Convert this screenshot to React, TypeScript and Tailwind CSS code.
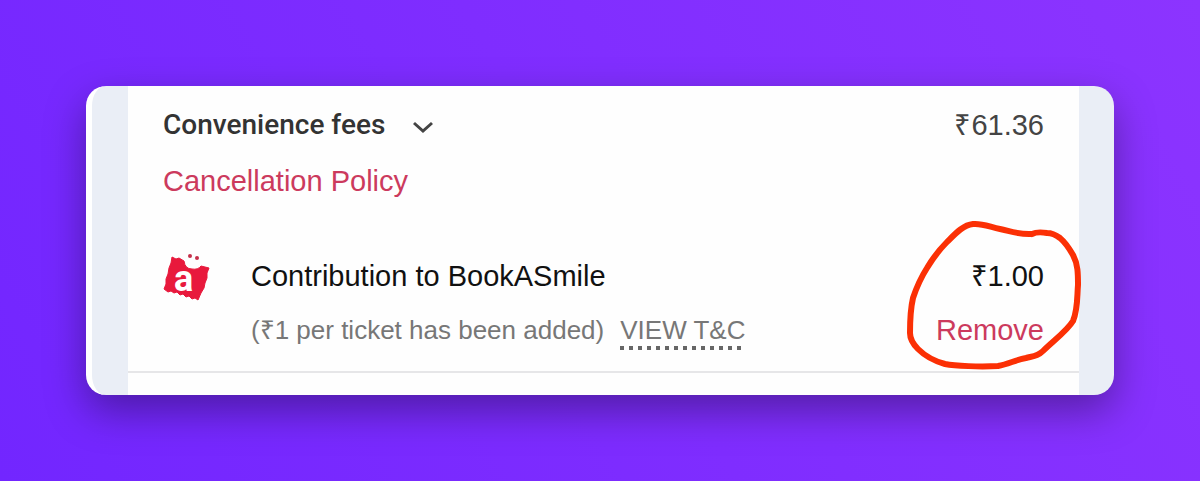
import { useState } from "react";

function BookASmileLogo() {
  return (
    <svg viewBox="0 0 48 50" className="mt-[-6px] h-[50px] w-12 shrink-0" role="img" aria-label="BookASmile">
      <path
        d="M9 3 L13 5 L16 4 L21 7 Q22 15 29 15 Q35 16 38 12 L46 14 L44 19 L44 24 L42 29 L41 34 L38 39 L35 46 L32 44 L29 45 L26 42 L23 43 L20 40 L17 41 L14 38 L11 39 L8 37 L5 38 L1 35 L3 30 L3 25 L5 20 L6 14 L8 9 Z"
        fill="#e8193c"
        stroke="#e8193c"
        strokeLinejoin="round"
      />
      <circle cx="27" cy="2" r="2" fill="#c5304a" />
      <circle cx="34" cy="4" r="2" fill="#c5304a" />
      <text
        x="11"
        y="37"
        fontFamily="Liberation Sans Narrow, Roboto, sans-serif"
        fontWeight="700"
        fontSize="36"
        fill="#fff"
      >
        a
      </text>
    </svg>
  );
}

function HandDrawnCircle() {
  return (
    <svg
      viewBox="0 0 176 152"
      className="pointer-events-none absolute right-[-39px] bottom-[-25px] h-[152px] w-44 overflow-visible"
      fill="none"
      stroke="#fb3005"
      strokeWidth="6"
      strokeLinecap="round"
      strokeLinejoin="round"
      aria-hidden="true"
    >
      <path d="M125 15 C113 16 103 12 93 10 C83 8 75 4 66 5 C56 6 48 15 40 23 C32 31 26 39 20 49 C13 60 9 70 6 79 C3 92 3 104 3 114 C3 121 7 126 11 130 C18 137 27 142 38 145 C48 147 73 148 91 147 C102 145 108 141 119 139 C127 137 131 137 136 132 C146 122 160 112 166 102 C171 90 170 77 171 66 C171 55 171 45 166 36 C162 29 159 24 153 19 C149 16 144 14 140 14 C134 13 129 13 125 15" />
    </svg>
  );
}

export default function App() {
  const [open, setOpen] = useState(false);
  return (
    <main className="flex min-h-screen flex-col justify-center bg-[linear-gradient(60deg,#7226ff,#8c34ff)] px-[86px] py-[86px] font-['Liberation_Sans',sans-serif] text-[29px] leading-8">
      <div className="overflow-hidden rounded-[20px] border-l-[6px] border-white bg-[#eaeef6] pr-[35px] pl-9 shadow-[0_16px_40px_rgba(0,0,0,0.35)]">
        <section className="bg-[#fefefe] pt-[23px] pb-[22px]">
          <div className="flex flex-col gap-6 px-[35px]">
            <div className="flex items-center justify-between">
              <button
                type="button"
                aria-expanded={open}
                onClick={() => setOpen(!open)}
                className="flex items-center gap-7 font-['Roboto',sans-serif] text-[28px] font-medium text-[#333]"
              >
                Convenience fees
                <svg viewBox="0 0 20 12" className="mt-1 h-3 w-5" fill="none" stroke="#444" strokeWidth="3" aria-hidden="true">
                  <path d="M1 2 L10 10 L19 2" />
                </svg>
              </button>
              <span className="text-[#444]">₹61.36</span>
            </div>
            <a href="#cancellation" className="self-start text-[#cc3a5d]">
              Cancellation Policy
            </a>
          </div>
          <div className="mt-[63px] flex items-start gap-10 px-[35px]">
            <BookASmileLogo />
            <div className="flex grow flex-col gap-[22px]">
              <h2 className="text-[#111]">Contribution to BookASmile</h2>
              <p className="flex items-start gap-4 text-[26px] text-[#777]">
                <span>(₹1 per ticket has been added)</span>
                <a
                  href="#terms"
                  className="bg-[repeating-linear-gradient(90deg,#666_0_4px,transparent_4px_9px)] bg-[length:100%_4px] bg-bottom bg-no-repeat pb-1"
                >
                  VIEW T&amp;C
                </a>
              </p>
            </div>
            <div className="relative flex flex-col items-end gap-[22px] self-start">
              <span className="text-[#111]">₹1.00</span>
              <button type="button" className="text-[#cc3a5d]">
                Remove
              </button>
              <HandDrawnCircle />
            </div>
          </div>
          <hr className="mt-[21px] border-t-2 border-[#e6e6e8]" />
        </section>
      </div>
    </main>
  );
}
